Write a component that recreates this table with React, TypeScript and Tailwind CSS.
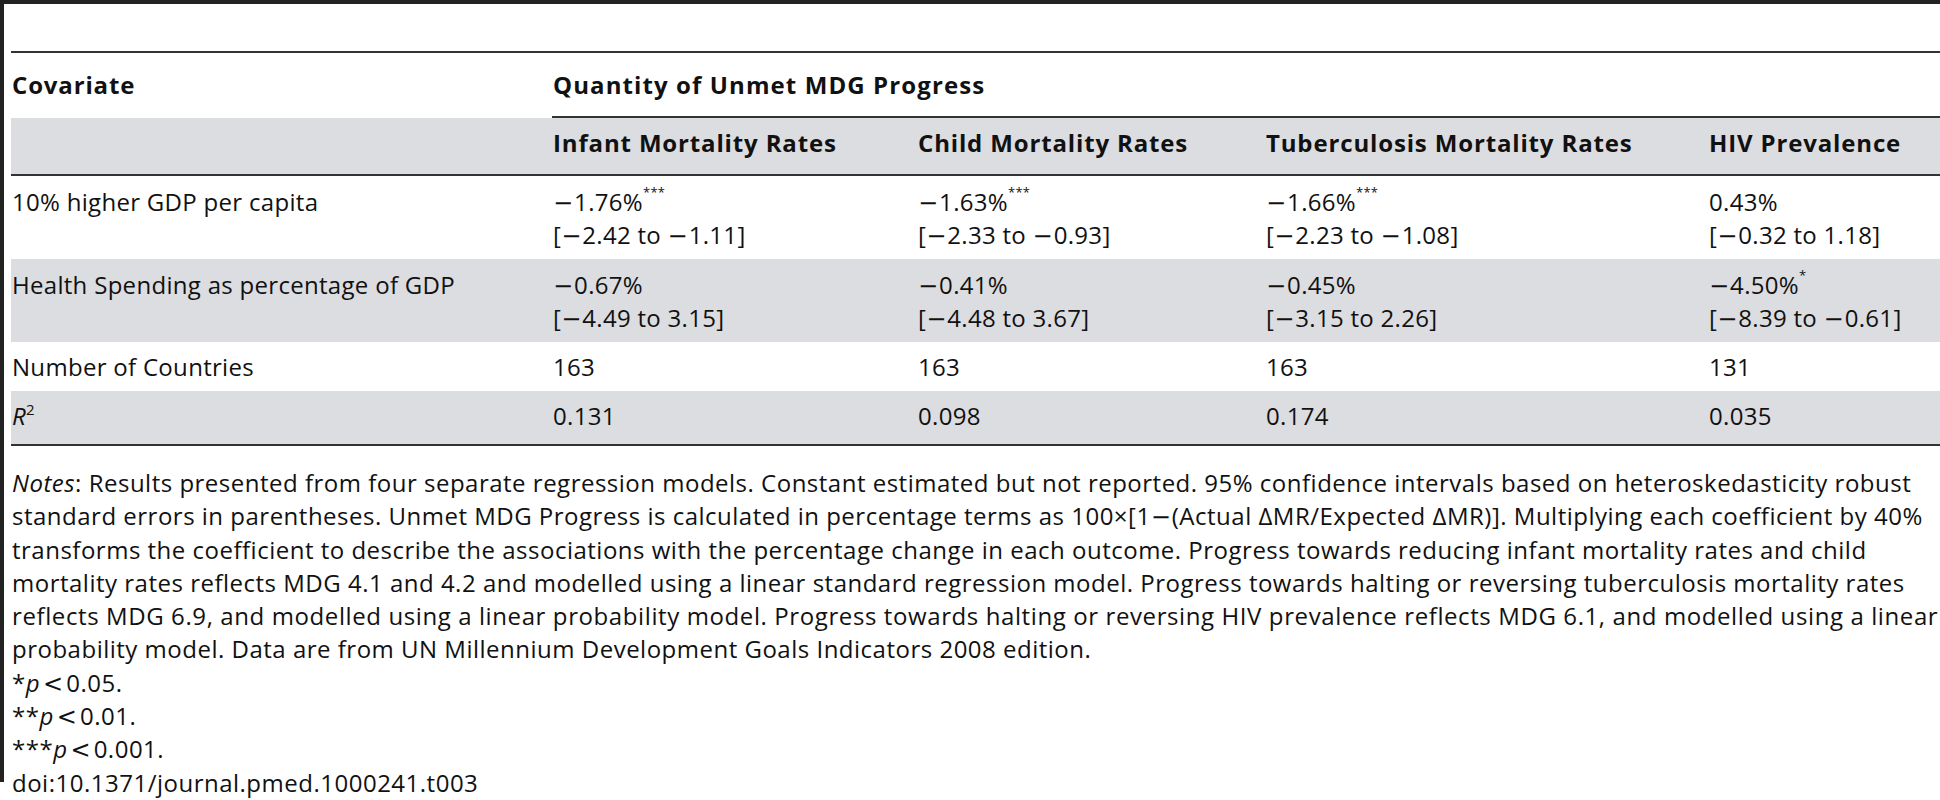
const cols = "grid grid-cols-[541px_365px_348px_443px_1fr]";

const Minus = () => (
  <span className="font-['DejaVu_Sans',sans-serif] leading-none tracking-normal mr-[1px]">−</span>
);

const Star = ({ n }: { n: string }) => (
  <span className="relative -top-[14px] text-[13px] leading-none">{n}</span>
);

// turn "−" into the wider math minus used by the journal
const num = (s: string) =>
  s.split("−").map((part, i) => (
    <span key={i}>
      {i > 0 && <Minus />}
      {part}
    </span>
  ));

const rows = [
  {
    label: "10% higher GDP per capita",
    bg: "bg-white",
    cells: [
      ["−1.76%", "***", "[−2.42 to −1.11]"],
      ["−1.63%", "***", "[−2.33 to −0.93]"],
      ["−1.66%", "***", "[−2.23 to −1.08]"],
      ["0.43%", "", "[−0.32 to 1.18]"],
    ],
  },
  {
    label: "Health Spending as percentage of GDP",
    bg: "bg-[#dcdde0]",
    cells: [
      ["−0.67%", "", "[−4.49 to 3.15]"],
      ["−0.41%", "", "[−4.48 to 3.67]"],
      ["−0.45%", "", "[−3.15 to 2.26]"],
      ["−4.50%", "*", "[−8.39 to −0.61]"],
    ],
  },
];

const notes = [
  "transforms the coefficient to describe the associations with the percentage change in each outcome. Progress towards reducing infant mortality rates and child",
  "mortality rates reflects MDG 4.1 and 4.2 and modelled using a linear standard regression model. Progress towards halting or reversing tuberculosis mortality rates",
  "reflects MDG 6.9, and modelled using a linear probability model. Progress towards halting or reversing HIV prevalence reflects MDG 6.1, and modelled using a linear",
  "probability model. Data are from UN Millennium Development Goals Indicators 2008 edition.",
];

const Lt = () => (
  <span className="font-['DejaVu_Sans',sans-serif] leading-none tracking-normal mx-[3px]">&lt;</span>
);

const App = () => {
  return (
    <div className="w-[1940px] h-[800px] overflow-hidden bg-white font-['Open_Sans',sans-serif] text-[24px] leading-[33px] text-[#111]">
      <div className="h-[4px] bg-[#222]"></div>
      <div className="flex">
        <div className="w-[4px] h-[778px] shrink-0 bg-[#222]"></div>
        <div className="flex-1 min-w-0 pl-[7px] pt-[47px]">
          {/* table */}
          <div className="border-t-2 border-[#333] tracking-[0.3px]">
            <div className={`${cols} font-bold tracking-[0.85px]`}>
              <div className="pl-[1px] pt-[15px] pb-[17px]">Covariate</div>
              <div className="col-span-4 pl-[1px] pt-[15px] pb-[15px] border-b-2 border-[#333] tracking-[1.1px]">
                Quantity of Unmet MDG Progress
              </div>
            </div>
            <div className={`${cols} bg-[#dcdde0] border-b-2 border-[#333] font-bold tracking-[0.85px]`}>
              <div></div>
              <div className="pl-[1px] pt-[8px] pb-[15px]">Infant Mortality Rates</div>
              <div className="pl-[1px] pt-[8px] pb-[15px]">Child Mortality Rates</div>
              <div className="pl-[1px] pt-[8px] pb-[15px]">Tuberculosis Mortality Rates</div>
              <div className="pl-[1px] pt-[8px] pb-[15px]">HIV Prevalence</div>
            </div>
            {rows.map((r) => (
              <div key={r.label} className={`${cols} ${r.bg}`}>
                <div className="pl-[1px] py-[8.5px]">{r.label}</div>
                {r.cells.map((c, i) => (
                  <div key={i} className="pl-[1px] py-[8.5px] whitespace-nowrap">
                    <div>
                      {num(c[0])}
                      {c[1] && <Star n={c[1]} />}
                    </div>
                    <div>{num(c[2])}</div>
                  </div>
                ))}
              </div>
            ))}
            <div className={cols}>
              <div className="pl-[1px] py-[8px]">Number of Countries</div>
              <div className="pl-[1px] py-[8px]">163</div>
              <div className="pl-[1px] py-[8px]">163</div>
              <div className="pl-[1px] py-[8px]">163</div>
              <div className="pl-[1px] py-[8px]">131</div>
            </div>
            <div className={`${cols} bg-[#dcdde0] border-b-2 border-[#333]`}>
              <div className="pl-[1px] pt-[8px] pb-[12px]">
                <i>R</i>
                <span className="relative -top-[10px] text-[15px] leading-none">2</span>
              </div>
              <div className="pl-[1px] pt-[8px] pb-[12px]">0.131</div>
              <div className="pl-[1px] pt-[8px] pb-[12px]">0.098</div>
              <div className="pl-[1px] pt-[8px] pb-[12px]">0.174</div>
              <div className="pl-[1px] pt-[8px] pb-[12px]">0.035</div>
            </div>
          </div>

          {/* notes */}
          <div className="mt-[20px] pl-[1px] leading-[33.3px] tracking-[0.5px] whitespace-nowrap">
            <div>
              <i>Notes</i>: Results presented from four separate regression models. Constant estimated but not
              reported. 95% confidence intervals based on heteroskedasticity robust
            </div>
            <div>
              standard errors in parentheses. Unmet MDG Progress is calculated in percentage terms as 100×[1
              <Minus />
              (Actual ΔMR/Expected ΔMR)]. Multiplying each coefficient by 40%
            </div>
            {notes.map((n, i) => (
              <div key={n} className={i === 2 ? "tracking-[0.6px]" : ""}>
                {n}
              </div>
            ))}
            <div>
              *<i>p</i>
              <Lt />
              0.05.
            </div>
            <div>
              **<i>p</i>
              <Lt />
              0.01.
            </div>
            <div>
              ***<i>p</i>
              <Lt />
              0.001.
            </div>
            <div>doi:10.1371/journal.pmed.1000241.t003</div>
          </div>
        </div>
      </div>
    </div>
  );
};

export default App;
